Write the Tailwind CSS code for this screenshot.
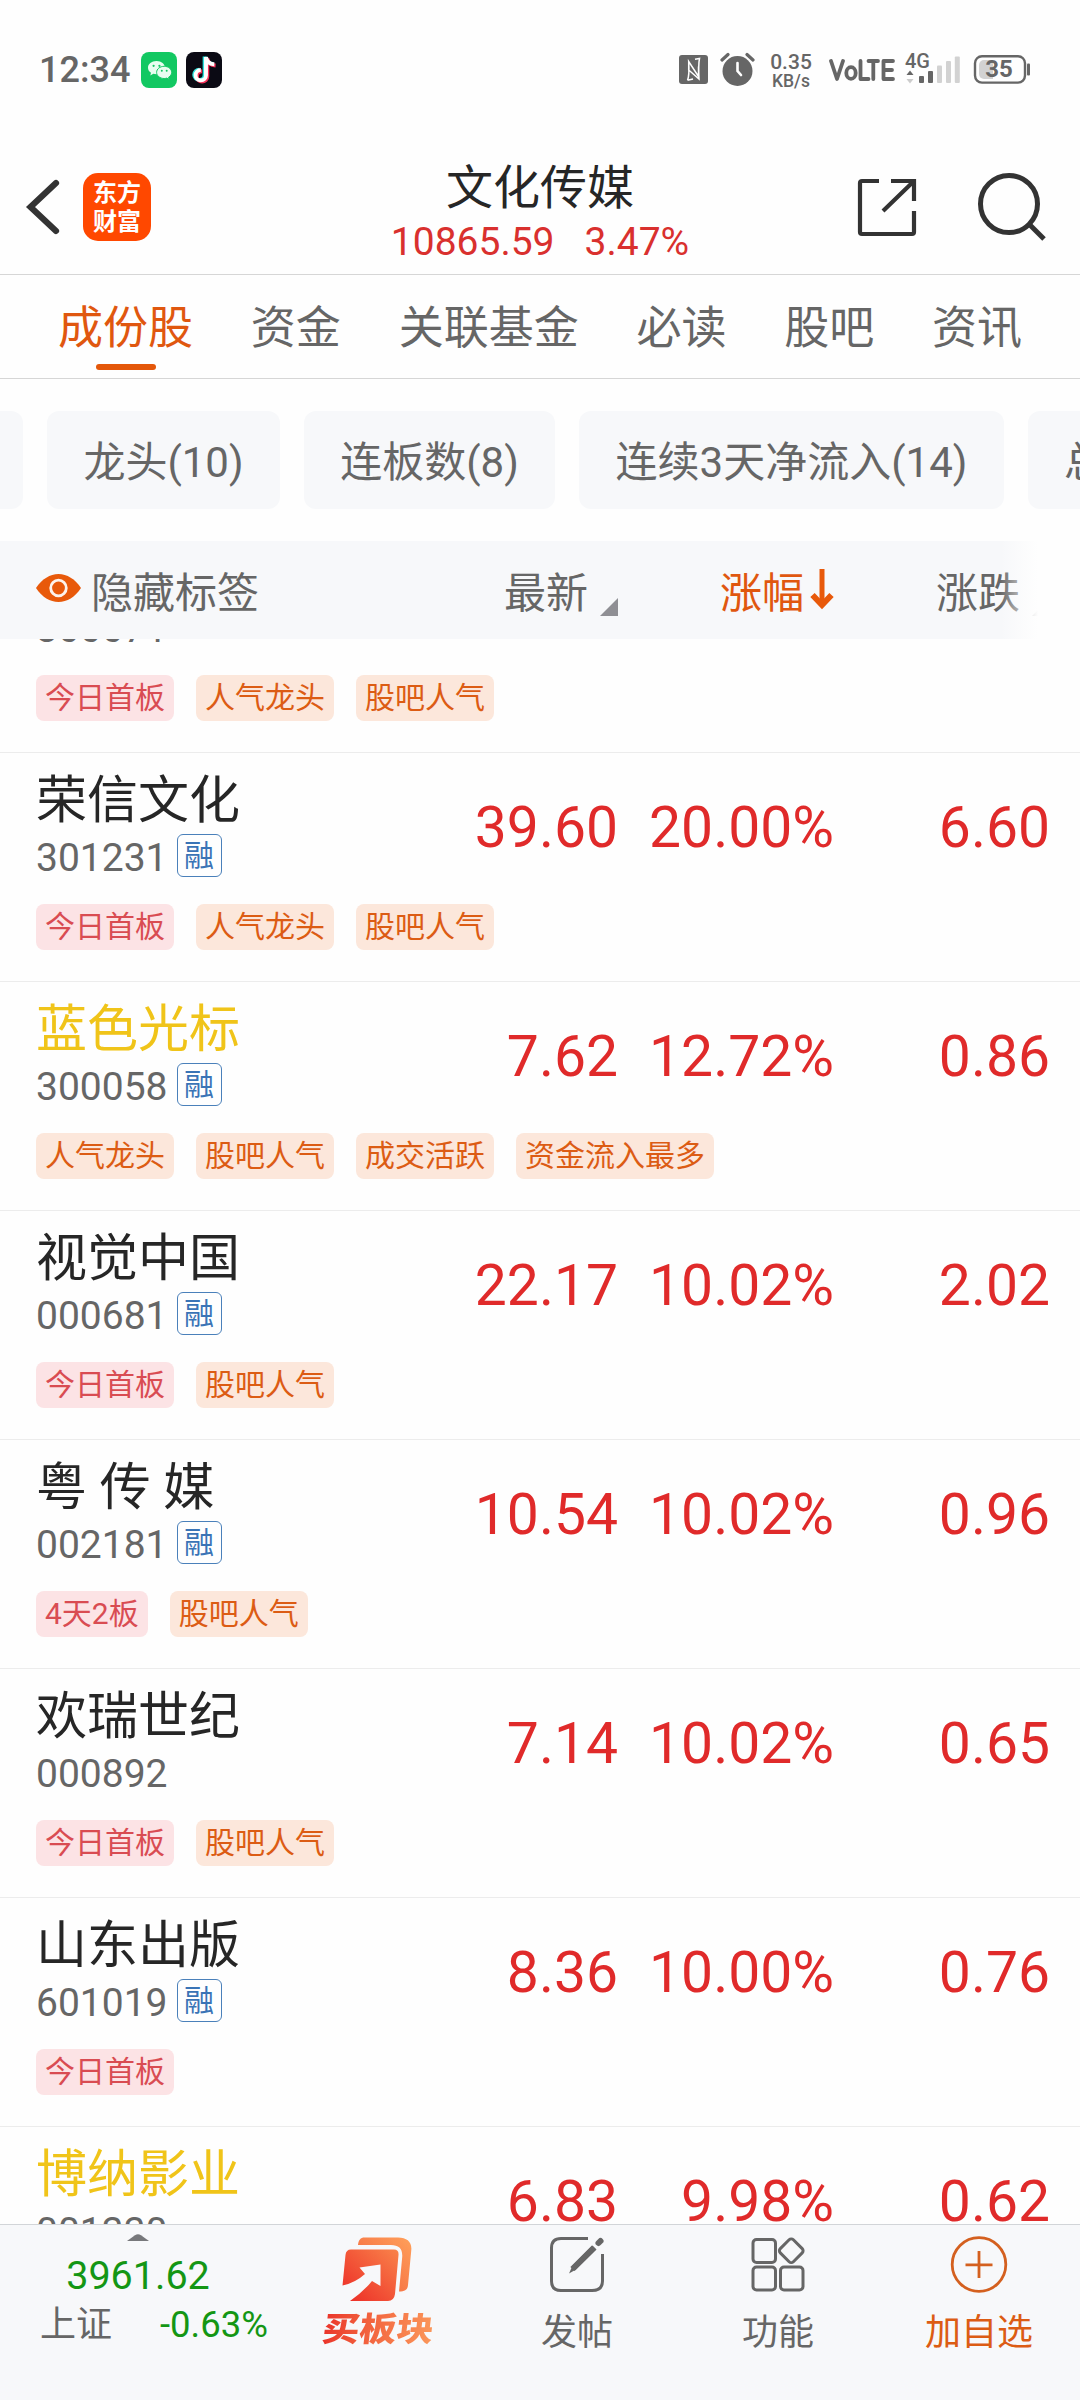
<!DOCTYPE html>
<html lang="zh-CN">
<head>
<meta charset="utf-8">
<title>文化传媒</title>
<script src="https://cdn.jsdelivr.net/npm/@tailwindcss/browser@4"></script>
</head>
<body class="w-[1080px] h-[2400px] overflow-hidden bg-[#fefefe] text-[#666] font-[Roboto,'Noto_Sans_CJK_SC',sans-serif] flex flex-col whitespace-nowrap">

<!-- status bar -->
<div class="h-[140px] shrink-0 flex items-start pt-[52px] pl-[39px] pr-[49px]">
  <span class="w-[102px] text-[36px] leading-[36px] font-medium">12:34</span>
  <svg class="size-9" viewBox="0 0 36 36"><rect width="36" height="36" rx="8" fill="#12c862"/>
    <path d="M15.500 9C10.500 9 7 12 7 15.700c0 2.100 1.200 3.900 3 5.100l-.7 2.600 3-1.600c1 .3 2 .4 3.200.4 5-.0 8.500-3 8.500-6.500S20.500 9 15.500 9z" fill="#e9fdf0"/>
    <path d="M23.200 14.300c-4.200 0-7.600 2.700-7.600 6.100s3.400 6.100 7.600 6.100c.9 0 1.800-.1 2.600-.4l2.400 1.300-.6-2.200c1.900-1.100 3.100-2.800 3.100-4.800 0-3.400-3.300-6.100-7.500-6.100z" fill="#e9fdf0" stroke="#12c862" stroke-width="1"/>
    <g fill="#12c862"><circle cx="12.600" cy="13.800" r="1.100"/><circle cx="18.400" cy="13.800" r="1.100"/><circle cx="20.800" cy="18.700" r="1"/><circle cx="25.700" cy="18.700" r="1"/></g></svg>
  <svg class="size-9 ml-[9px]" viewBox="0 0 36 36"><rect width="36" height="36" rx="8" fill="#0b0a14"/>
    <g fill="none" stroke-width="3.900"><path d="M19.200 5v18.200a5.200 5.200 0 1 1-5.200-5.200M19.200 5c.6 4.300 3.600 7 8.300 7.300" stroke="#2ee6e0" transform="translate(-.6 -.4)"/><path d="M20.600 5v18.200a5.200 5.200 0 1 1-5.200-5.200M20.600 5c.6 4.300 3.600 7 8.300 7.300" stroke="#f5325b" transform="translate(.7 1.200)"/><path d="M20 5v18.200a5.200 5.200 0 1 1-5.200-5.200M20 5c.6 4.300 3.600 7 8.300 7.300" stroke="#fff"/></g></svg>
  <div class="ml-auto flex">
    <svg class="w-[29px] h-9" viewBox="0 0 29 36"><rect y="3" width="29" height="29" rx="3" fill="#666"/><path d="M8.500 28.200Q10.500 24 9.700 9.500L19.500 24.500V14.500M8.500 28.200L14 27M9.700 9.500V18L20 27Q19.300 12 20.500 6.500L16 7.300" fill="none" stroke="#fff" stroke-width="1.500"/></svg>
    <svg class="w-[36px] h-9 ml-[12px]" viewBox="0 0 36 36"><circle cx="17.500" cy="19" r="15" fill="#666"/><path d="M2 8l6-5.500M33 8l-6-5.500" stroke="#666" stroke-width="3.200" stroke-linecap="round"/><path d="M17.500 11v8l3.500 4" fill="none" stroke="#fff" stroke-width="2.600" stroke-linecap="round"/></svg>
    <div class="ml-[14px] w-[42px] text-center font-medium"><div class="text-[21px] leading-[20px]">0.35</div><div class="text-[17.500px] leading-[18px]">KB/s</div></div>
    <svg class="w-[66px] h-9 ml-[17px]" viewBox="0 0 66 36" fill="none" stroke="#666" stroke-width="3.800" stroke-linecap="round" stroke-linejoin="round"><path d="M2 9l6 18 6-18M31.500 9v18h8M39.500 9h9.500M44.300 9v18M64 9h-9.500v18H64M54.500 18H63"/><ellipse cx="22" cy="21" rx="4.700" ry="5.800"/></svg>
    <div class="relative w-[55px] h-9 ml-[10px]">
      <span class="absolute left-0 top-0 text-[20px] leading-[18px] font-medium">4G</span>
      <svg class="w-[55px] h-9" viewBox="0 0 55 36"><path d="M1.500 23l3.500-4.500L8.500 23z" fill="#666"/><path d="M1.500 27l3.500 4.500L8.500 27z" fill="#ccc"/><g fill="#666"><rect x="14" y="24" width="5" height="7" rx="1"/><rect x="23" y="19" width="5" height="12" rx="1"/></g><g fill="#d2d2d2"><rect x="32" y="13.500" width="5" height="17.500" rx="1"/><rect x="41" y="9" width="5" height="22" rx="1"/><rect x="49.800" y="4.500" width="5" height="26.500" rx="1"/></g></svg>
    </div>
    <div class="relative w-[58px] h-9 ml-[13px]">
      <svg class="w-[58px] h-9" viewBox="0 0 58 36"><rect x="2" y="4.200" width="50" height="26.400" rx="7" fill="none" stroke="#666" stroke-width="2.400"/><path d="M11 8h9v19h-9a5 5 0 0 1-5-5v-9a5 5 0 0 1 5-5z" fill="#d2d2d2"/><rect x="54" y="11.500" width="3" height="12" rx="1" fill="#666"/></svg>
      <span class="absolute left-0 top-0 w-[52px] text-center text-[24px] leading-[35px] font-bold">35</span>
    </div>
  </div>
</div>

<!-- header -->
<div class="h-[135px] shrink-0 border-b border-[#d6d6d6] grid grid-cols-[360px_360px_360px]">
  <div class="flex items-start pt-[33px] pl-[24px]">
    <svg class="w-[40px] h-[68px]" viewBox="0 0 40 68"><path d="M32 10L6.500 34 32 58" fill="none" stroke="#333" stroke-width="6.200" stroke-linecap="round" stroke-linejoin="miter"/></svg>
    <div class="ml-[19px] size-[68px] rounded-[15px] bg-[#ff4800] text-white text-center font-bold text-[24px] leading-[29px] pt-[3px] font-['Noto_Sans_CJK_SC',sans-serif]">东方<br>财富</div>
  </div>
  <div class="flex flex-col items-center pt-[20px]">
    <div class="text-[47px] leading-[56px] text-[#262626]">文化传媒</div>
    <div class="text-[39px] leading-[46px] text-[#d9302e] flex gap-[30px] mt-[3px]"><span>10865.59</span><span>3.47%</span></div>
  </div>
  <div class="flex items-start justify-end pt-[33px] pr-[32px] gap-[58px]">
    <svg class="w-[62px] h-[68px]" viewBox="0 0 62 68" fill="none" stroke="#333" stroke-width="4.200"><path d="M25 8H8Q6 8 6 10V59Q6 61 8 61H58Q60 61 60 59V38M37 8H60V28M59 9L29 38" transform="translate(-2 0)"/></svg>
    <svg class="w-[72px] h-[72px]" viewBox="0 0 72 72" fill="none" stroke="#333" stroke-width="5"><circle cx="33" cy="31" r="28.500"/><path d="M52 50L68 66"/></svg>
  </div>
</div>

<!-- tabs -->
<div class="h-[104px] shrink-0 border-b border-[#d6d6d6] flex gap-[57.800px] pl-[58px] text-[45px] leading-[54px] pt-[27px]">
  <div class="text-[#e0570f] flex flex-col items-center"><span>成份股</span><span class="w-[60px] h-[6px] rounded-full bg-[#e4570a] mt-[8px]"></span></div>
  <span>资金</span><span>关联基金</span><span>必读</span><span>股吧</span><span>资讯</span>
</div>

<!-- filter chips -->
<div class="h-[162px] shrink-0 flex gap-6 pt-8 text-[42px] leading-[104px] overflow-hidden">
  <div class="w-[23px] h-[98px] shrink-0 rounded-r-xl bg-[#f7f8fa]"></div>
  <div class="w-[233px] h-[98px] shrink-0 rounded-xl bg-[#f7f8fa] text-center">龙头(10)</div>
  <div class="w-[251px] h-[98px] shrink-0 rounded-xl bg-[#f7f8fa] text-center">连板数(8)</div>
  <div class="w-[425px] h-[98px] shrink-0 rounded-xl bg-[#f7f8fa] text-center">连续3天净流入(14)</div>
  <div class="w-[233px] h-[98px] shrink-0 rounded-xl bg-[#f7f8fa] pl-9">总市值</div>
</div>

<!-- column header -->
<div class="relative h-[98px] shrink-0 bg-[#f7f8fa] flex text-[42px] leading-[105px] pl-9">
  <svg class="w-[45px] h-[30px] mt-[32px]" viewBox="0 0 45 30"><path d="M0 15C6 6 14 1 22.500 1S39 6 45 15C39 24 31 29 22.500 29S6 24 0 15z" fill="#e8590a"/><circle cx="22.500" cy="15" r="7.800" fill="none" stroke="#fdf3ec" stroke-width="2.800"/></svg>
  <span class="ml-[10px] w-[413px]">隐藏标签</span>
  <span>最新</span>
  <svg class="w-[18px] h-[18px] mt-[57px] ml-[12px]" viewBox="0 0 18 18"><path d="M18 0v18H0z" fill="#8f8f94"/></svg>
  <span class="ml-[102px] text-[#e0570f]">涨幅</span>
  <svg class="w-[24px] h-[42px] mt-[27px] ml-[6px]" viewBox="0 0 24 42" fill="none" stroke="#e8590a"><path d="M12 1v36" stroke-width="5"/><path d="M2.500 27l9.500 10 9.500-10" stroke-width="6"/></svg>
  <span class="ml-[102px]">涨跌</span>
  <svg class="w-[18px] h-[18px] mt-[57px] ml-[12px]" viewBox="0 0 18 18"><path d="M18 0v18H0z" fill="#8f8f94"/></svg>
  <div class="absolute right-0 top-0 h-full w-[80px] bg-linear-to-r from-[#fefefe]/0 to-[#fefefe] to-[38px]"></div>
</div>

<!-- stock list -->
<div class="h-[1585px] shrink-0 overflow-hidden"><div id="list" class="-mt-[115px]"></div></div>

<!-- bottom bar -->
<div class="h-[176px] shrink-0 bg-[#f7f8fa] border-t border-[#d2d5d8] flex">
  <div class="w-[276px] flex flex-col items-center pt-[9px]">
    <svg class="w-[22px] h-[7px]" viewBox="0 0 22 7"><path d="M0 7L8 1.200Q11-.8 14 1.200L22 7z" fill="#77787b"/></svg>
    <div class="text-[39.500px] leading-[46px] text-[#149614] mt-[12px]">3961.62</div>
    <div class="w-full flex pl-[40px] text-[36px] leading-[44px] mt-[4px]"><span class="w-[120px]">上证</span><span class="text-[36.500px] text-[#149614]">-0.63%</span></div>
  </div>
  <div class="w-[201px] flex flex-col items-center pt-[11px]">
    <svg class="w-[72px] h-[66px]" viewBox="0 0 72 66"><defs><linearGradient id="a" x1="0" y1="1" x2="1" y2="0"><stop offset="0" stop-color="#ec2a26"/><stop offset="1" stop-color="#f9834a"/></linearGradient><linearGradient id="b" x1="0" y1="1" x2="1" y2="0"><stop offset="0" stop-color="#f2603c"/><stop offset="1" stop-color="#ffa05a"/></linearGradient></defs>
      <path d="M17 9C17.500 4 19.500 1.500 23.500 1.500H57C66 1.500 71 6 70.300 14L67 49C66.500 54 64 55.500 58 55.500L61.200 21C61.800 13 58 9 50 9z" fill="url(#b)"/>
      <path d="M10 13.500H53Q58 13.500 57.500 19L54 58Q53 65 47 65H9Q23 55 31 45L39.500 50V28.500L18.500 31.500L24 38Q14 47 1.500 49.500L4.500 19Q5 13.500 10 13.500z" fill="url(#a)"/></svg>
    <div class="font-black text-[37px] leading-[44px] mt-[3px] ml-[4px] px-1 -skew-x-6 scale-y-90 text-transparent bg-clip-text bg-linear-to-r from-[#e92c28] to-[#fb9a5c] font-['Noto_Sans_CJK_SC',sans-serif]">买板块</div>
  </div>
  <div class="w-[200px] flex flex-col items-center pt-[11px]">
    <svg class="w-[56px] h-[58px]" viewBox="0 0 56 58" fill="none" stroke="#666" stroke-width="3"><path d="M39 2.500H12Q2.500 2.500 2.500 12V45Q2.500 54.500 12 54.500H43Q53.500 54.500 53.500 45V18"/><path d="M20 37.500l3.500-8L43.500 9.500l4 4L27 33.500z" fill="#666" stroke="none"/><path d="M23.500 33L45 11.500" stroke-width="6"/><path d="M49.500 7l2-2" stroke-width="6" stroke-linecap="round"/></svg>
    <div class="text-[36px] leading-[44px] mt-[17px]">发帖</div>
  </div>
  <div class="w-[202px] flex flex-col items-center pt-[11px]">
    <svg class="w-[54px] h-[58px]" viewBox="0 0 54 58" fill="none" stroke="#666" stroke-width="3"><rect x="2" y="3.500" width="22.500" height="23" rx="3.500"/><rect x="2" y="31" width="22.500" height="23" rx="3.500"/><rect x="29.500" y="31" width="22.500" height="23" rx="3.500"/><rect x="31" y="5.500" width="18.500" height="18.500" rx="3" transform="rotate(45 40.250 14.750)"/></svg>
    <div class="text-[36px] leading-[44px] mt-[17px]">功能</div>
  </div>
  <div class="w-[200px] flex flex-col items-center pt-[11px] text-[#dc5c14]">
    <svg class="w-[58px] h-[58px]" viewBox="0 0 58 58" fill="none" stroke="#d4601f" stroke-width="2.800"><circle cx="29" cy="28.500" r="26.800"/><path d="M29 15v27M15.500 28.800h27"/></svg>
    <div class="text-[36px] leading-[44px] mt-[17px]">加自选</div>
  </div>
</div>

<script>
const rows = [
  ["", "300071", 0, "", "", "", ["今日首板", "人气龙头", "股吧人气"]],
  ["荣信文化", "301231", 1, "39.60", "20.00%", "6.60", ["今日首板", "人气龙头", "股吧人气"]],
  ["蓝色光标", "300058", 1, "7.62", "12.72%", "0.86", ["人气龙头", "股吧人气", "成交活跃", "资金流入最多"], 1],
  ["视觉中国", "000681", 1, "22.17", "10.02%", "2.02", ["今日首板", "股吧人气"]],
  ["粤 传 媒", "002181", 1, "10.54", "10.02%", "0.96", ["4天2板", "股吧人气"]],
  ["欢瑞世纪", "000892", 0, "7.14", "10.02%", "0.65", ["今日首板", "股吧人气"]],
  ["山东出版", "601019", 1, "8.36", "10.00%", "0.76", ["今日首板"]],
  ["博纳影业", "001330", 0, "6.83", "9.98%", "0.62", [], 1],
];
const tag = t => `<span class="h-[46px] rounded-lg px-[9px] text-[30px] leading-[46px] ${t.endsWith("板") ? "bg-[#fce3e5] text-[#d94c52]" : "bg-[#fce7db] text-[#dc5c14]"}">${t}</span>`;
document.getElementById("list").innerHTML = rows.map(([name, code, margin, price, pct, chg, tags, fav]) => `
<div class="h-[229px] border-b border-[#ececec] pl-9">
  <div class="flex h-[151px]">
    <div class="w-[394px] pt-[18px]">
      <div class="h-[63px] text-[51px] leading-[60px] ${fav ? "text-[#f0c419]" : "text-[#262626]"}">${name}</div>
      <div class="h-[43px] flex gap-[9px]"><span class="text-[39px] leading-[49px]">${code}</span>${margin ? '<span class="w-[45px] h-[43px] rounded-md border border-[#4a80ba] text-[#3a74b6] text-[30px] leading-[41px] text-center">融</span>' : ""}</div>
    </div>
    <div class="flex text-right text-[57px] leading-[150px] text-[#e02a2a]"><span class="w-[188px]">${price}</span><span class="w-[216px]">${pct}</span><span class="w-[216px]">${chg}</span></div>
  </div>
  <div class="flex gap-[22px]">${tags.map(tag).join("")}</div>
</div>`).join("");
</script>
</body>
</html>
